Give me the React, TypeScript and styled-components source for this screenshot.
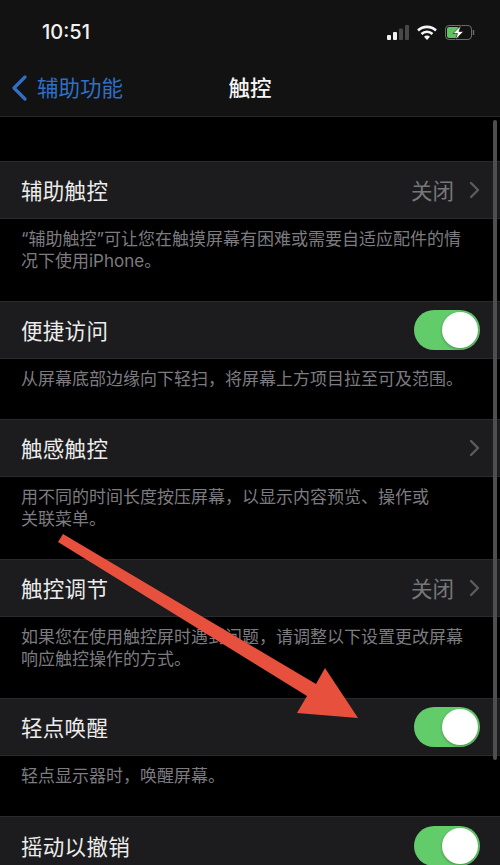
import React from "react";
import styled, { createGlobalStyle } from "styled-components";

const GlobalStyle = createGlobalStyle`
  html, body {
    margin: 0;
    padding: 0;
    background: #000;
  }
`;

const Screen = styled.div`
  position: relative;
  width: 500px;
  height: 865px;
  overflow: hidden;
  background: #000;
  font-family: "Noto Sans CJK SC", "Liberation Sans", sans-serif;
`;

const Header = styled.header`
  height: 117px;
  background: #121212;
  border-bottom: 1px solid #262626;
  box-sizing: border-box;
`;

const StatusBar = styled.div`
  height: 64px;
  padding: 0 25px 0 42px;
  box-sizing: border-box;
  display: flex;
  align-items: center;
  justify-content: space-between;
`;

const Time = styled.span`
  font-family: "Inter", "Liberation Sans", sans-serif;
  font-size: 20px;
  font-weight: 500;
  color: #f2f2f2;
`;

const StatusIcons = styled.div`
  display: flex;
  align-items: center;
  gap: 8px;
`;

const NavBar = styled.div`
  position: relative;
  height: 48px;
  display: flex;
  align-items: center;
  justify-content: center;
`;

const BackLink = styled.div`
  position: absolute;
  left: 11px;
  top: 0;
  height: 48px;
  display: flex;
  align-items: center;
  gap: 10px;
  color: #2f6fc6;
  font-size: 21.5px;
`;

const BackText = styled.span`
  margin-top: -3px;
`;

const Title = styled.span`
  margin-top: -3px;
  color: #f5f5f5;
  font-size: 21.5px;
  font-weight: 500;
`;

const List = styled.main`
  padding-top: 44px;
`;

const Row = styled.div<{ $clipped?: boolean }>`
  height: ${(p) => (p.$clipped ? 60 : 58)}px;
  box-sizing: border-box;
  padding: 0 20px 0 21px;
  display: flex;
  align-items: center;
  justify-content: space-between;
  background: #1c1c1e;
  border-top: 1px solid #2a2a2c;
  border-bottom: 1px solid #2a2a2c;
`;

const RowLabel = styled.span`
  margin-top: -2px;
  color: #ececec;
  font-size: 21.5px;
  letter-spacing: 0.3px;
`;

const RowValue = styled.div`
  display: flex;
  align-items: center;
  gap: 15px;
  color: #77777a;
  font-size: 21.5px;
`;

const ValueText = styled.span`
  margin-top: -2px;
`;

const Note = styled.p<{ $height: number }>`
  margin: 0;
  height: ${(p) => p.$height}px;
  box-sizing: border-box;
  padding: 9px 21px 0;
  color: #7c7c80;
  font-family: "Inter", "Noto Sans CJK SC", sans-serif;
  font-size: 17px;
  line-height: 22px;
  white-space: pre-line;
`;

const Toggle = styled.div`
  position: relative;
  width: 66px;
  height: 40px;
  border-radius: 20px;
  background: #62cc6a;
  flex: none;
`;

const Knob = styled.div`
  position: absolute;
  right: 2px;
  top: 2px;
  width: 36px;
  height: 36px;
  border-radius: 50%;
  background: #fff;
  box-shadow: 0 1px 3px rgba(0, 0, 0, 0.3);
`;

const ScrollBar = styled.div`
  position: absolute;
  right: 3px;
  top: 120px;
  width: 4px;
  height: 640px;
  border-radius: 2px;
  background: #4e4e50;
`;

const ArrowLayer = styled.svg`
  position: absolute;
  left: 0;
  top: 0;
  pointer-events: none;
`;

const Chevron = () => (
  <svg width="11" height="18" viewBox="0 0 11 18" fill="none">
    <path d="M2 2l7 7-7 7" stroke="#5c5c5f" strokeWidth="2.4" strokeLinecap="round" strokeLinejoin="round" />
  </svg>
);

const BackChevron = () => (
  <svg width="16" height="26" viewBox="0 0 16 26" fill="none">
    <path d="M14 2L3 13l11 11" stroke="#2f6fc6" strokeWidth="3.2" strokeLinecap="round" strokeLinejoin="round" />
  </svg>
);

const Signal = () => (
  <svg width="22" height="15" viewBox="0 0 22 15">
    <rect x="0" y="10" width="4" height="5" rx="1" fill="#f0f0f0" />
    <rect x="6" y="7" width="4" height="8" rx="1" fill="#f0f0f0" />
    <rect x="12" y="3.500" width="4" height="11.500" rx="1" fill="#48484a" />
    <rect x="18" y="0" width="4" height="15" rx="1" fill="#48484a" />
  </svg>
);

const Wifi = () => (
  <svg width="20" height="15" viewBox="0 0 20 15" fill="none" stroke="#f5f5f5" strokeWidth="2.6">
    <path d="M1 5.500a13 13 0 0 1 18 0" />
    <path d="M4.500 9a8 8 0 0 1 11 0" />
    <path d="M10 15l-3-3.300a4.200 4.200 0 0 1 6 0z" fill="#f5f5f5" stroke="none" />
  </svg>
);

const Battery = () => (
  <svg width="30" height="15" viewBox="0 0 30 15" fill="none">
    <rect x="0.5" y="0.5" width="26" height="14" rx="3.500" stroke="#6a6a6a" />
    <rect x="2" y="2" width="12" height="11" rx="2" fill="#5ec462" />
    <path d="M28.500 5v5" stroke="#6a6a6a" strokeWidth="1.500" />
    <path d="M16 0.500L8 8.500h4.500l-2 6L18.500 6.500H14z" fill="#fff" stroke="#121212" strokeWidth="0.6" />
  </svg>
);

export default function App() {
  return (
    <Screen>
      <GlobalStyle />
      <Header>
        <StatusBar>
          <Time>10:51</Time>
          <StatusIcons>
            <Signal />
            <Wifi />
            <Battery />
          </StatusIcons>
        </StatusBar>
        <NavBar>
          <BackLink>
            <BackChevron />
            <BackText>辅助功能</BackText>
          </BackLink>
          <Title>触控</Title>
        </NavBar>
      </Header>

      <List>
        <Row>
          <RowLabel>辅助触控</RowLabel>
          <RowValue>
            <ValueText>关闭</ValueText>
            <Chevron />
          </RowValue>
        </Row>
        <Note $height={82}>
          {"“辅助触控”可让您在触摸屏幕有困难或需要自适应配件的情\n况下使用iPhone。"}
        </Note>

        <Row>
          <RowLabel>便捷访问</RowLabel>
          <Toggle>
            <Knob />
          </Toggle>
        </Row>
        <Note $height={60}>从屏幕底部边缘向下轻扫，将屏幕上方项目拉至可及范围。</Note>

        <Row>
          <RowLabel>触感触控</RowLabel>
          <RowValue>
            <Chevron />
          </RowValue>
        </Row>
        <Note $height={82}>
          {"用不同的时间长度按压屏幕，以显示内容预览、操作或\n关联菜单。"}
        </Note>

        <Row>
          <RowLabel>触控调节</RowLabel>
          <RowValue>
            <ValueText>关闭</ValueText>
            <Chevron />
          </RowValue>
        </Row>
        <Note $height={81}>
          {"如果您在使用触控屏时遇到问题，请调整以下设置更改屏幕\n响应触控操作的方式。"}
        </Note>

        <Row>
          <RowLabel>轻点唤醒</RowLabel>
          <Toggle>
            <Knob />
          </Toggle>
        </Row>
        <Note $height={60}>轻点显示器时，唤醒屏幕。</Note>

        <Row $clipped>
          <RowLabel>摇动以撤销</RowLabel>
          <Toggle>
            <Knob />
          </Toggle>
        </Row>
      </List>

      <ScrollBar />

      <ArrowLayer width="500" height="865" viewBox="0 0 500 865">
        <path
          d="M63 534L316 684L325 668L358 718L297 713L307 696L58 542Z"
          fill="#e8503e"
        />
      </ArrowLayer>
    </Screen>
  );
}
